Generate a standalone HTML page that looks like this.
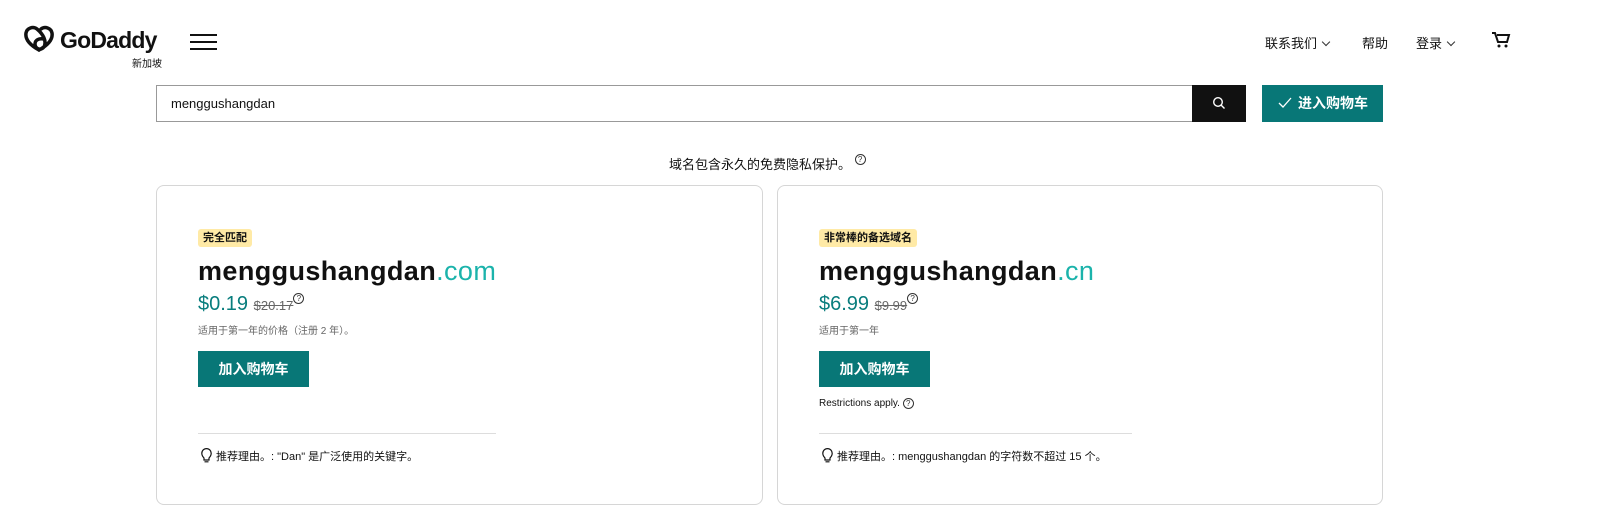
<!DOCTYPE html>
<html><head><meta charset="utf-8"><style>
*{box-sizing:border-box;margin:0;padding:0}
body{width:1600px;height:523px;background:#fff;font-family:"Liberation Sans","Noto Sans CJK SC",sans-serif;color:#111;position:relative;overflow:hidden}
.a{position:absolute}
.card{position:absolute;top:185px;height:320px;border:1px solid #d6d6d6;border-radius:8px;background:#fff}
.badge{position:absolute;left:41px;top:43px;background:#ffeaa6;border-radius:3px;font-size:11px;font-weight:bold;padding:2px 5px;line-height:14px}
.dom{position:absolute;left:41px;top:70px;font-size:27px;font-weight:bold;letter-spacing:0.4px}
.dom span{color:#1bb3ab;font-weight:normal}
.price{position:absolute;left:41px;top:107px;font-size:20px;color:#087d7d}
.price s{font-size:13px;color:#666}
.q{display:inline-block;width:11px;height:11px;border:1px solid #333;border-radius:50%;font-size:8px;line-height:9px;text-align:center;color:#333;vertical-align:top;font-weight:normal}
.note{position:absolute;left:41px;top:136px;font-size:10px;color:#666}
.btn{position:absolute;left:41px;top:165px;width:111px;height:36px;background:#087777;color:#fff;font-size:14px;font-weight:bold;text-align:center;line-height:36px}
.hr{position:absolute;left:41px;top:247px;height:1px;background:#ddd}
.rs{position:absolute;left:44px;top:262px;font-size:11px;color:#111}
.rs svg{vertical-align:-3px;margin-right:4px}
.chev{display:inline-block;width:6px;height:6px;border-right:1px solid #333;border-bottom:1px solid #333;transform:rotate(45deg);margin-left:6px;vertical-align:3px}
</style></head><body>
<svg class="a" style="left:23px;top:25px" width="32" height="28" viewBox="0 0 32 28"><path d="M16 25C7 20 2 14 3 8 4 3 10 1 14 4 20 9 24 16 21 22 18 26 12 24 12 19 12 15 16 13 21 14M16 25C25 20 30 14 29 8 28 3 22 1 18 4" fill="none" stroke="#111" stroke-width="3.5" stroke-linecap="round"/></svg>
<div class="a" style="left:60px;top:27px;font-size:23px;font-weight:bold;letter-spacing:-0.8px">GoDaddy</div>
<div class="a" style="left:132px;top:55px;font-size:10px">新加坡</div>
<div class="a" style="left:190px;top:34px;width:27px;height:2px;background:#111"></div>
<div class="a" style="left:190px;top:41px;width:27px;height:2px;background:#111"></div>
<div class="a" style="left:190px;top:48px;width:27px;height:2px;background:#111"></div>
<div class="a" style="left:1265px;top:33px;font-size:13px">联系我们<span class="chev"></span></div>
<div class="a" style="left:1362px;top:33px;font-size:13px">帮助</div>
<div class="a" style="left:1416px;top:33px;font-size:13px">登录<span class="chev"></span></div>
<svg class="a" style="left:1490px;top:30px" width="22" height="20" viewBox="0 0 22 20"><path d="M2 3h3l3 9h9l2-7H7" fill="none" stroke="#111" stroke-width="2"/><circle cx="9" cy="16" r="1.5" fill="#111"/><circle cx="16" cy="16" r="1.5" fill="#111"/></svg>
<div class="a" style="left:156px;top:85px;width:1037px;height:37px;border:1px solid #999;border-right:none;font-size:13px;padding:10px 14px">menggushangdan</div>
<div class="a" style="left:1192px;top:85px;width:54px;height:37px;background:#111"></div>
<svg class="a" style="left:1212px;top:96px" width="14" height="14" viewBox="0 0 14 14"><circle cx="6" cy="6" r="4.3" fill="none" stroke="#fff" stroke-width="1.4"/><path d="M9 9l3.5 3.5" stroke="#fff" stroke-width="1.4"/></svg>
<div class="a" style="left:1262px;top:85px;width:121px;height:37px;background:#087777;color:#fff;font-size:14px;font-weight:bold;line-height:37px;padding-left:16px"><svg width="14" height="12" viewBox="0 0 14 12" style="vertical-align:-1px;margin-right:6px"><path d="M1 6l4 4 8-9" fill="none" stroke="#fff" stroke-width="1.3"/></svg>进入购物车</div>
<div class="a" style="left:669px;top:154px;font-size:13px">域名包含永久的免费隐私保护。 <span class="q">?</span></div>
<div class="card" style="left:156px;width:607px">
<div class="badge">完全匹配</div>
<div class="dom">menggushangdan<span>.com</span></div>
<div class="price">$0.19 <s>$20.17</s><span class="q">?</span></div>
<div class="note">适用于第一年的价格（注册 2 年）。</div>
<div class="btn">加入购物车</div>
<div class="hr" style="width:298px"></div>
<div class="rs"><svg width="11" height="15" viewBox="0 0 11 15"><path d="M3 10C1 8 .8 6.5 .8 5.3A4.7 4.7 0 0 1 10.2 5.3C10.2 6.5 10 8 8 10V12H3Z M3.5 13.8H7.5" fill="none" stroke="#111" stroke-width="1.2"/></svg>推荐理由。: "Dan" 是广泛使用的关键字。</div>
</div>
<div class="card" style="left:777px;width:606px">
<div class="badge">非常棒的备选域名</div>
<div class="dom">menggushangdan<span>.cn</span></div>
<div class="price">$6.99 <s>$9.99</s><span class="q">?</span></div>
<div class="note">适用于第一年</div>
<div class="btn">加入购物车</div>
<div class="a" style="left:41px;top:212px;font-size:10px">Restrictions apply. <span class="q">?</span></div>
<div class="hr" style="width:313px"></div>
<div class="rs"><svg width="11" height="15" viewBox="0 0 11 15"><path d="M3 10C1 8 .8 6.5 .8 5.3A4.7 4.7 0 0 1 10.2 5.3C10.2 6.5 10 8 8 10V12H3Z M3.5 13.8H7.5" fill="none" stroke="#111" stroke-width="1.2"/></svg>推荐理由。: menggushangdan 的字符数不超过 15 个。</div>
</div>
</body></html>
